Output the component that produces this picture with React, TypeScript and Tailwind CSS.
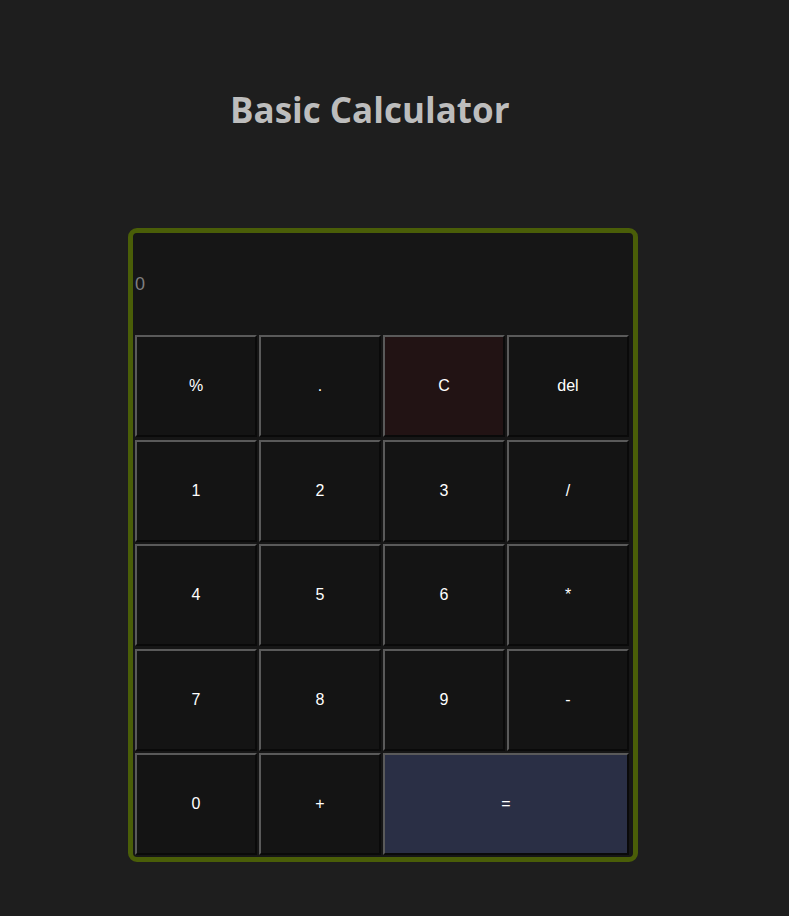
import React from "react";

const keys: { label: string; cls?: string; span?: boolean }[] = [
  { label: "%" },
  { label: "." },
  { label: "C", cls: "bg-[#221314]" },
  { label: "del" },
  { label: "1" },
  { label: "2" },
  { label: "3" },
  { label: "/" },
  { label: "4" },
  { label: "5" },
  { label: "6" },
  { label: "*" },
  { label: "7" },
  { label: "8" },
  { label: "9" },
  { label: "-" },
  { label: "0" },
  { label: "+" },
  { label: "=", cls: "bg-[#2a2f45]", span: true },
];

export default function App() {
  return (
    <div className="min-h-[916px] w-full bg-[#1e1e1e] font-['Liberation_Sans',sans-serif]">
      <div className="pt-[88px] pl-[230px]">
        <h1 className="text-[35px] leading-[44px] font-bold text-[#bdbdbd] font-['Open_Sans',sans-serif] tracking-[0px]">
          Basic Calculator
        </h1>
      </div>
      <div className="ml-[128px] mt-[96px] w-[510px] rounded-[9px] border-[5px] border-[#4a5e08] bg-[#161616] pb-[2px] pl-[2px]">
        <div className="h-[102px] -ml-[2px] flex items-center text-[18px] text-[#7f7f7f] pl-[2px]">
          0
        </div>
        <div className="grid grid-cols-[repeat(4,122px)] auto-rows-[102px] gap-x-[2px] gap-y-[2.5px]">
          {keys.map((k) => (
            <button
              key={k.label}
              className={`border-2 border-t-[#5a5a5a] border-l-[#5a5a5a] border-r-[#0a0a0a] border-b-[#0a0a0a] text-white text-[16px] flex items-center justify-center ${
                k.cls ?? "bg-[#141414]"
              } ${k.span ? "col-span-2" : ""}`}
            >
              {k.label}
            </button>
          ))}
        </div>
      </div>
    </div>
  );
}
